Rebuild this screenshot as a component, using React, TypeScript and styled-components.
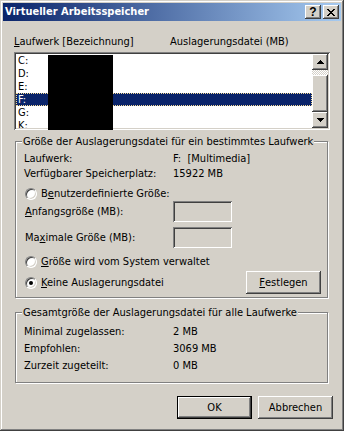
import styled, { createGlobalStyle } from 'styled-components';

const GlobalStyle = createGlobalStyle`
  html, body {
    margin: 0;
    padding: 0;
    background: #d4d0c8;
  }
  body {
    font-family: Tahoma, 'DejaVu Sans Condensed', 'Liberation Sans', sans-serif;
    font-size: 11px;
    color: #000;
  }
`;

const raised = `
  box-shadow: inset -1px -1px 0 #404040, inset 1px 1px 0 #ffffff,
    inset -2px -2px 0 #808080, inset 2px 2px 0 #d4d0c8;
`;

const sunken = `
  box-shadow: inset 1px 1px 0 #808080, inset -1px -1px 0 #ffffff,
    inset 2px 2px 0 #404040, inset -2px -2px 0 #d4d0c8;
`;

interface IRow {
  drive: string;
  selected?: boolean;
}

const drives: IRow[] = [
  { drive: 'C:' },
  { drive: 'D:' },
  { drive: 'E:' },
  { drive: 'F:', selected: true },
  { drive: 'G:' },
  { drive: 'K:' },
];

const App = () => {
  return (
    <>
      <GlobalStyle />
      <Window>
        <TitleBar>
          <Title>Virtueller Arbeitsspeicher</Title>
          <CaptionButton>
            <HelpGlyph>?</HelpGlyph>
          </CaptionButton>
          <CaptionButton>
            <svg width='8' height='7' viewBox='0 0 8 7'>
              <path
                d='M0 0h2v1h1v1h2V1h1V0h2v1H7v1H6v1H5v1h1v1h1v1h1v1H6V6H5V5H3v1H2v1H0V6h1V5h1V4h1V3H2V2H1V1H0z'
                fill='#000'
              />
            </svg>
          </CaptionButton>
        </TitleBar>

        <Body>
          <ListHeader>
            <span>
              <Key>L</Key>aufwerk [Bezeichnung]
            </span>
            <span>Auslagerungsdatei (MB)</span>
          </ListHeader>

          <ListBox>
            <ListRows>
              {drives.map((d) => (
                <ListRow key={d.drive} $selected={d.selected}>
                  {d.drive}
                </ListRow>
              ))}
            </ListRows>
            <ScrollBar>
              <ScrollButton>
                <svg width='7' height='4' viewBox='0 0 7 4'>
                  <path d='M3 0h1v1h1v1h1v1h1v1H0V3h1V2h1V1h1z' fill='#000' />
                </svg>
              </ScrollButton>
              <ScrollTrack>
                <ScrollGap />
                <ScrollThumb />
              </ScrollTrack>
              <ScrollButton>
                <svg width='7' height='4' viewBox='0 0 7 4'>
                  <path d='M0 0h7v1H6v1H5v1H4v1H3V3H2V2H1V1H0z' fill='#000' />
                </svg>
              </ScrollButton>
            </ScrollBar>
            <Redacted />
          </ListBox>

          <Group $top={5}>
            <Legend>Größe der Auslagerungsdatei für ein bestimmtes Laufwerk</Legend>
            <GroupContent $pt={4} $pb={3}>
              <InfoGrid $gap={2}>
                <span>Laufwerk:</span>
                <Pre>F:  [Multimedia]</Pre>
                <span>Verfügbarer Speicherplatz:</span>
                <span>15922 MB</span>
              </InfoGrid>

              <RadioRow $top={7}>
                <Radio />
                <span>
                  B<Key>e</Key>nutzerdefinierte Größe:
                </span>
              </RadioRow>

              <FieldRow $top={1}>
                <span>
                  <Key>A</Key>nfangsgröße (MB):
                </span>
                <TextBox />
              </FieldRow>
              <FieldRow $top={5}>
                <span>
                  Ma<Key>x</Key>imale Größe (MB):
                </span>
                <TextBox />
              </FieldRow>

              <RadioRow $top={7}>
                <Radio />
                <span>
                  <Key>G</Key>röße wird vom System verwaltet
                </span>
              </RadioRow>

              <SetRow>
                <RadioRow $top={0}>
                  <Radio $checked />
                  <span>
                    <Key>K</Key>eine Auslagerungsdatei
                  </span>
                </RadioRow>
                <PushButton>
                  <Key>F</Key>estlegen
                </PushButton>
              </SetRow>
            </GroupContent>
          </Group>

          <Group $top={8}>
            <Legend>Gesamtgröße der Auslagerungsdatei für alle Laufwerke</Legend>
            <GroupContent $pt={6} $pb={10}>
              <InfoGrid $gap={4}>
                <span>Minimal zugelassen:</span>
                <span>2 MB</span>
                <span>Empfohlen:</span>
                <span>3069 MB</span>
                <span>Zurzeit zugeteilt:</span>
                <span>0 MB</span>
              </InfoGrid>
            </GroupContent>
          </Group>

          <DialogButtons>
            <PushButton $default>OK</PushButton>
            <PushButton>Abbrechen</PushButton>
          </DialogButtons>
        </Body>
      </Window>
    </>
  );
};

const Window = styled.div`
  width: 344px;
  height: 431px;
  box-sizing: border-box;
  padding: 3px;
  display: flex;
  flex-direction: column;
  background: #d4d0c8;
  box-shadow: inset -1px -1px 0 #404040, inset 1px 1px 0 #d4d0c8,
    inset -2px -2px 0 #808080, inset 2px 2px 0 #ffffff;
`;

const TitleBar = styled.div`
  height: 18px;
  display: flex;
  align-items: center;
  gap: 2px;
  padding: 0 2px 0 2px;
  background: linear-gradient(to right, #0a246a, #a6caf0);
`;

const Title = styled.div`
  flex: 1;
  color: #fff;
  font-weight: bold;
  font-size: 11px;
  line-height: 14px;
  white-space: nowrap;
`;

const CaptionButton = styled.div`
  width: 16px;
  height: 14px;
  display: flex;
  align-items: center;
  justify-content: center;
  background: #d4d0c8;
  ${raised}
`;

const HelpGlyph = styled.span`
  font-family: 'Liberation Sans', Arial, sans-serif;
  font-weight: bold;
  font-size: 12px;
  line-height: 12px;
  margin-top: -1px;
`;

const Body = styled.div`
  flex: 1;
  padding: 14px 11px 0 11px;
  display: flex;
  flex-direction: column;
`;

const Key = styled.span`
  text-decoration: underline;
`;

const Pre = styled.span`
  white-space: pre;
`;

const ListHeader = styled.div`
  display: grid;
  grid-template-columns: 156px 1fr;
  line-height: 13px;
  height: 13px;
`;

const ListBox = styled.div`
  position: relative;
  margin-top: 4px;
  height: 78px;
  box-sizing: border-box;
  padding: 2px;
  display: flex;
  background: #fff;
  ${sunken}
`;

const ListRows = styled.div`
  flex: 1;
  overflow: hidden;
`;

const ListRow = styled.div<{ $selected?: boolean }>`
  height: 13px;
  box-sizing: border-box;
  line-height: 11px;
  padding-left: 1px;
  border: 1px ${(p) => (p.$selected ? 'dotted #f5db95' : 'solid transparent')};
  background: ${(p) => (p.$selected ? '#0a246a' : 'transparent')};
  color: ${(p) => (p.$selected ? '#fff' : '#000')};
`;

const ScrollBar = styled.div`
  width: 16px;
  display: flex;
  flex-direction: column;
`;

const ScrollButton = styled.div`
  width: 16px;
  height: 16px;
  flex: none;
  display: flex;
  align-items: center;
  justify-content: center;
  background: #d4d0c8;
  ${raised}
`;

const ScrollTrack = styled.div`
  flex: 1;
  display: flex;
  flex-direction: column;
  background: repeating-conic-gradient(#d4d0c8 0 25%, #ffffff 0 50%) 0 0 / 2px 2px;
`;

const ScrollGap = styled.div`
  height: 5px;
`;

const ScrollThumb = styled.div`
  flex: 1;
  background: #d4d0c8;
  ${raised}
`;

const Redacted = styled.div`
  position: absolute;
  left: 34px;
  top: 3px;
  width: 65px;
  bottom: 0;
  background: #000;
`;

const Group = styled.fieldset<{ $top: number }>`
  margin: ${(p) => p.$top}px 2px 0 1px;
  padding: 0;
  border: 1px solid #808080;
  box-shadow: 1px 1px 0 #ffffff, inset 1px 1px 0 #ffffff;
  min-inline-size: 0;
`;

const Legend = styled.legend`
  margin-left: 6px;
  padding: 0 1px;
  line-height: 13px;
  background: #d4d0c8;
`;

const GroupContent = styled.div<{ $pt: number; $pb: number }>`
  padding: ${(p) => p.$pt}px 6px ${(p) => p.$pb}px 8px;
  display: flex;
  flex-direction: column;
`;

const InfoGrid = styled.div<{ $gap: number }>`
  display: grid;
  grid-template-columns: 149px 1fr;
  row-gap: ${(p) => p.$gap}px;
  line-height: 13px;
`;

const RadioRow = styled.div<{ $top: number }>`
  margin-top: ${(p) => p.$top}px;
  display: flex;
  align-items: center;
  gap: 4px;
  line-height: 13px;
  padding-left: 1px;
`;

const Radio = styled.span<{ $checked?: boolean }>`
  width: 12px;
  height: 12px;
  box-sizing: border-box;
  border-radius: 50%;
  border: 1px solid;
  border-color: #808080 #ffffff #ffffff #808080;
  background: #fff;
  box-shadow: inset 1px 1px 0 #404040, inset -1px -1px 0 #d4d0c8;
  display: flex;
  align-items: center;
  justify-content: center;
  &::after {
    content: '';
    width: 4px;
    height: 4px;
    border-radius: 50%;
    background: ${(p) => (p.$checked ? '#000' : 'transparent')};
  }
`;

const FieldRow = styled.div<{ $top: number }>`
  margin-top: ${(p) => p.$top}px;
  display: grid;
  grid-template-columns: 149px 59px;
  align-items: center;
  line-height: 13px;
  padding-left: 1px;
`;

const TextBox = styled.div`
  width: 59px;
  height: 21px;
  box-sizing: border-box;
  margin-left: -1px;
  background: #d4d0c8;
  ${sunken}
`;

const SetRow = styled.div`
  margin-top: 3px;
  display: flex;
  align-items: center;
  justify-content: space-between;
`;

const PushButton = styled.div<{ $default?: boolean }>`
  width: 75px;
  height: 23px;
  box-sizing: border-box;
  display: flex;
  align-items: center;
  justify-content: center;
  background: #d4d0c8;
  border: ${(p) => (p.$default ? '1px solid #000' : 'none')};
  ${raised}
`;

const DialogButtons = styled.div`
  margin-top: 13px;
  margin-right: -3px;
  display: flex;
  justify-content: flex-end;
  gap: 6px;
`;

export default App;
